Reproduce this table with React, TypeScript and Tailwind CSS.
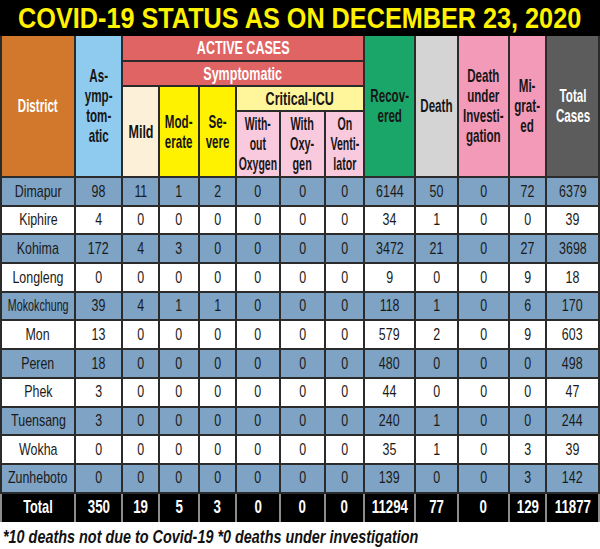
import type { ReactNode } from 'react';

const FONT = "font-['Liberation_Sans','Arimo',Arial,sans-serif]";

interface Row {
  district: string;
  values: number[];
}

const ROWS: Row[] = [
  { district: 'Dimapur', values: [98, 11, 1, 2, 0, 0, 0, 6144, 50, 0, 72, 6379] },
  { district: 'Kiphire', values: [4, 0, 0, 0, 0, 0, 0, 34, 1, 0, 0, 39] },
  { district: 'Kohima', values: [172, 4, 3, 0, 0, 0, 0, 3472, 21, 0, 27, 3698] },
  { district: 'Longleng', values: [0, 0, 0, 0, 0, 0, 0, 9, 0, 0, 9, 18] },
  { district: 'Mokokchung', values: [39, 4, 1, 1, 0, 0, 0, 118, 1, 0, 6, 170] },
  { district: 'Mon', values: [13, 0, 0, 0, 0, 0, 0, 579, 2, 0, 9, 603] },
  { district: 'Peren', values: [18, 0, 0, 0, 0, 0, 0, 480, 0, 0, 0, 498] },
  { district: 'Phek', values: [3, 0, 0, 0, 0, 0, 0, 44, 0, 0, 0, 47] },
  { district: 'Tuensang', values: [3, 0, 0, 0, 0, 0, 0, 240, 1, 0, 0, 244] },
  { district: 'Wokha', values: [0, 0, 0, 0, 0, 0, 0, 35, 1, 0, 3, 39] },
  { district: 'Zunheboto', values: [0, 0, 0, 0, 0, 0, 0, 139, 0, 0, 3, 142] },
];

const TOTALS = [350, 19, 5, 3, 0, 0, 0, 11294, 77, 0, 129, 11877];

const COLS =
  'grid-cols-[72px_45px_35px_38px_35px_42px_43px_37px_49px_41px_49px_35px_51px]';

// the print uses a condensed face; squeeze Liberation Sans to match
function Narrow({ sx, children }: { sx: string; children: ReactNode }) {
  return <span className={`inline-block shrink-0 whitespace-nowrap ${sx}`}>{children}</span>;
}

function Head({
  className,
  sx = 'scale-x-[0.61]',
  children,
}: {
  className: string;
  sx?: string;
  children: ReactNode;
}) {
  return (
    <div
      className={`flex items-center justify-center overflow-hidden text-center text-[19px] font-bold leading-[20px] ${className}`}
    >
      <Narrow sx={sx}>{children}</Narrow>
    </div>
  );
}

function Cell({
  className,
  sx = 'scale-x-[0.73]',
  children,
}: {
  className: string;
  sx?: string;
  children: ReactNode;
}) {
  return (
    <div className={`flex items-center justify-center overflow-hidden ${className}`}>
      <Narrow sx={sx}>{children}</Narrow>
    </div>
  );
}

export default function App() {
  return (
    <div className={`h-[549px] w-[600px] overflow-hidden bg-white ${FONT}`}>
      {/* Title */}
      <div className="flex h-[36px] items-center justify-center overflow-hidden bg-black">
        <h1 className="inline-block shrink-0 whitespace-nowrap text-[29px] font-bold leading-none text-[#fff200] scale-x-[0.87]">
          COVID-19 STATUS AS ON DECEMBER 23, 2020
        </h1>
      </div>

      <div className="flex flex-col gap-[2px] bg-[#2b2b2b] px-[2px]">
        {/* Header + district rows */}
        <div
          className={`grid ${COLS} grid-rows-[24px_23px_23px_64px_repeat(11,26.7px)] gap-[2px]`}
        >
          <Head className="col-start-1 row-span-4 row-start-1 bg-[#d2782d] text-white">
            District
          </Head>
          <Head className="col-start-2 row-span-4 row-start-1 bg-[#8fcbef] text-[#161616]">
            As-
            <br />
            ymp-
            <br />
            tom-
            <br />
            atic
          </Head>
          <Head
            className="col-span-6 col-start-3 row-start-1 bg-[#e06464] text-[18px] text-white"
            sx="scale-x-[0.66]"
          >
            ACTIVE CASES
          </Head>
          <Head
            className="col-span-6 col-start-3 row-start-2 bg-[#e06464] text-[18px] text-white"
            sx="scale-x-[0.66]"
          >
            Symptomatic
          </Head>
          <Head
            className="col-start-3 row-span-2 row-start-3 bg-[#fdf0d9] text-[#161616]"
            sx="scale-x-[0.66]"
          >
            Mild
          </Head>
          <Head className="col-start-4 row-span-2 row-start-3 bg-[#fff200] text-[#161616]">
            Mod-
            <br />
            erate
          </Head>
          <Head className="col-start-5 row-span-2 row-start-3 bg-[#fff200] text-[#161616]">
            Se-
            <br />
            vere
          </Head>
          <Head
            className="col-span-3 col-start-6 row-start-3 bg-[#fff59b] text-[18px] text-[#161616]"
            sx="scale-x-[0.66]"
          >
            Critical-ICU
          </Head>
          <Head
            className="col-start-6 row-start-4 bg-[#f9c9dd] text-[#161616]"
            sx="scale-x-[0.55]"
          >
            With-
            <br />
            out
            <br />
            Oxygen
          </Head>
          <Head
            className="col-start-7 row-start-4 bg-[#f9c9dd] text-[#161616]"
            sx="scale-x-[0.57]"
          >
            With
            <br />
            Oxy-
            <br />
            gen
          </Head>
          <Head
            className="col-start-8 row-start-4 bg-[#f9c9dd] text-[#161616]"
            sx="scale-x-[0.56]"
          >
            On
            <br />
            Venti-
            <br />
            lator
          </Head>
          <Head className="col-start-9 row-span-4 row-start-1 bg-[#1aa668] text-[#161616]">
            Recov-
            <br />
            ered
          </Head>
          <Head className="col-start-10 row-span-4 row-start-1 bg-[#d4d4d4] text-[#161616]">
            Death
          </Head>
          <Head className="col-start-11 row-span-4 row-start-1 bg-[#f49ab9] text-[#161616]">
            Death
            <br />
            under
            <br />
            Investi-
            <br />
            gation
          </Head>
          <Head className="col-start-12 row-span-4 row-start-1 bg-[#f49ab9] text-[#161616]">
            Mi-
            <br />
            grat-
            <br />
            ed
          </Head>
          <Head className="col-start-13 row-span-4 row-start-1 bg-[#5c5c5c] text-white">
            Total
            <br />
            Cases
          </Head>

          {ROWS.map((row, i) => {
            const bg = i % 2 === 0 ? 'bg-[#7ea3c5]' : 'bg-white';
            return [
              <Cell
                key={`${row.district}-name`}
                className={`text-[17px] text-[#1a1a1a] ${bg}`}
                sx={row.district === 'Mokokchung' ? 'scale-x-[0.63]' : 'scale-x-[0.73]'}
              >
                {row.district}
              </Cell>,
              ...row.values.map((v, j) => (
                <Cell key={`${row.district}-${j}`} className={`text-[17px] text-[#1a1a1a] ${bg}`}>
                  {v}
                </Cell>
              )),
            ];
          })}
        </div>

        {/* Totals */}
        <div className={`-mx-[2px] grid ${COLS} h-[28px] gap-x-[2px] bg-[#8c8c8c] px-[2px]`}>
          <Cell className="bg-black text-[19px] font-bold text-white" sx="scale-x-[0.67]">
            Total
          </Cell>
          {TOTALS.map((v, j) => (
            <Cell
              key={j}
              className="bg-black text-[19px] font-bold text-white"
              sx="scale-x-[0.7]"
            >
              {v}
            </Cell>
          ))}
        </div>
      </div>

      {/* Footnote */}
      <p className="pl-[3px] pt-[5px] leading-[20px]">
        <span className="inline-block origin-left whitespace-nowrap text-[18px] font-bold italic text-[#111] scale-x-[0.8]">
          *10 deaths not due to Covid-19 *0 deaths under investigation
        </span>
      </p>
    </div>
  );
}
